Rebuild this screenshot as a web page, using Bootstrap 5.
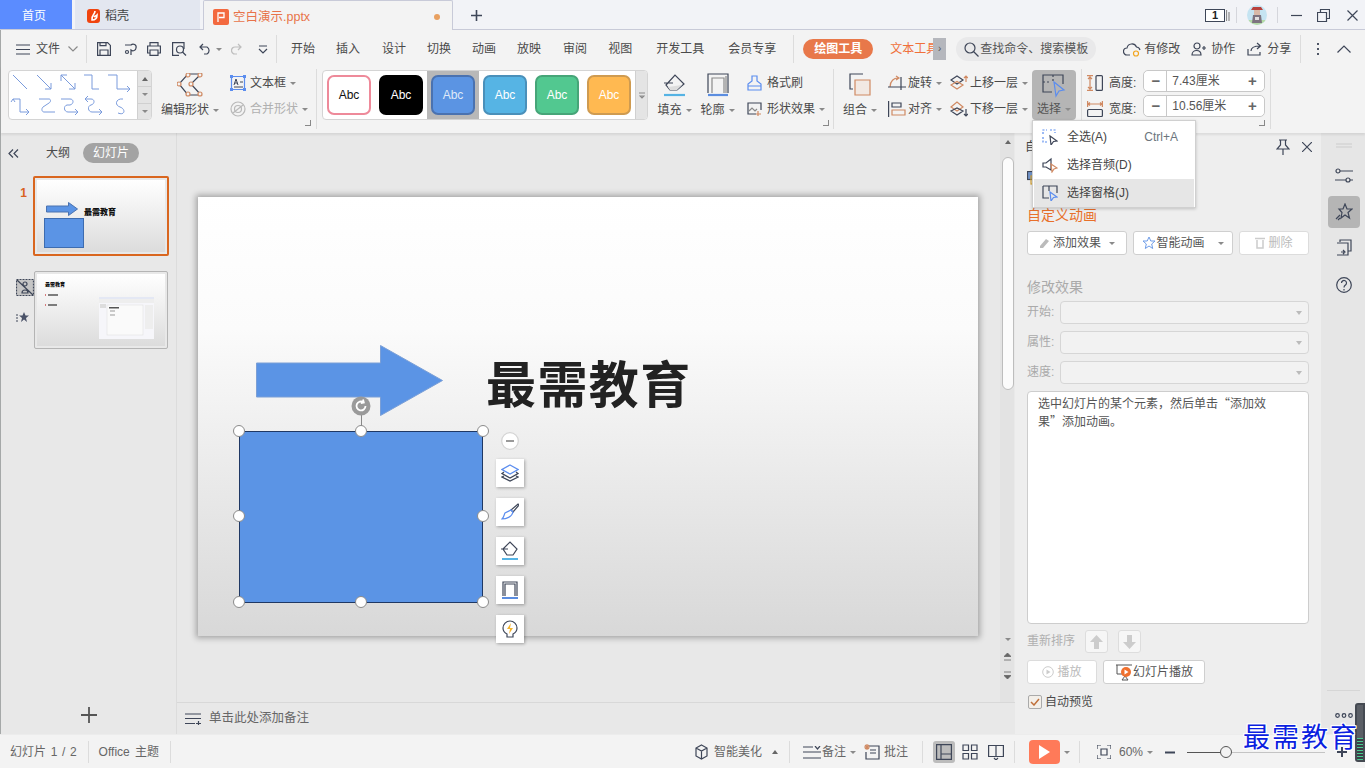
<!DOCTYPE html>
<html lang="zh-CN">
<head>
<meta charset="utf-8">
<title>空白演示.pptx</title>
<link href="https://cdn.jsdelivr.net/npm/bootstrap@5.3.0/dist/css/bootstrap.min.css" rel="stylesheet">
<style>
html,body{height:100%;overflow:hidden}
body{font-family:"Liberation Sans","Noto Sans CJK SC",sans-serif;font-size:12px;line-height:1.2;color:#4a4a4a;background:#f3f3f3}
svg{display:block;flex:none}
.ic{fill:none;stroke:#3e4658;stroke-width:1.2}
.ic .o{stroke:#d08a63}.ic .b{stroke:#5b8def}.ic .g{stroke:#8a8a8a}.ic .lb{stroke:#55b3e4}
.ic .fb{fill:#5b8def;stroke:none}
.x1{margin-left:1px}.x2{margin-left:2px}.x3{margin-left:3px}.x4{margin-left:4px}.x5{margin-left:5px}.x6{margin-left:6px}.x7{margin-left:7px}.x8{margin-left:8px}.x9{margin-left:9px}.x10{margin-left:10px}.x11{margin-left:11px}.x12{margin-left:12px}.x13{margin-left:13px}.x14{margin-left:14px}.x15{margin-left:15px}.x16{margin-left:16px}.x17{margin-left:17px}.x21{margin-left:21px}.x22{margin-left:22px}.x24{margin-left:24px}.x27{margin-left:27px}
.crt{display:inline-block;flex:none;width:0;height:0;border-left:3px solid transparent;border-right:3px solid transparent;border-top:3px solid #8a8a8a}
.crt-up{border-top:0;border-bottom:4px solid #666}
.vsep{width:1px;align-self:stretch;background:#dcdcdc;flex:none}
/* title bar */
.ttl{height:30px;background:#f2f3f7;border-bottom:1px solid #c8cad8;flex:none}
.tab-home{width:72px;height:29px;background:#5b8cff;color:#fff;padding:3px 4px 0 0}
.tab-dk{width:125px;height:29px;background:#e3e7f0;margin-left:3px;padding:3px 0 0 12px;color:#444}
.tab-cur{width:250px;height:30px;margin-left:3px;background:#f3f3f3;border:1px solid #c8cad8;border-bottom:0;border-radius:2px 2px 0 0;padding:3px 0 0 9px;color:#e8734a;font-size:12.5px}
.dot-o{width:6px;height:6px;border-radius:50%;background:#e8a060;margin-left:auto;margin-right:12px}
.logo{width:16px;height:16px;border-radius:2px;background:#f3693f;color:#fff}
.num1{width:20px;height:13px;border:1px solid #3e4658;background:#fff;font-size:11px;font-weight:700;color:#222;line-height:11px;text-align:center}
.winsep{height:16px;width:1px;background:#d5d6dc}
.plus-t{margin-top:2px}
.win-r{padding-top:1px}
.win-end{margin-right:7px}
/* body */
.wbody{border-left:1px solid #a5a8a8;min-height:0}
.mrow{height:36px;flex:none;padding-top:2px;background:#f3f3f3}
.mrow .vsep{margin-top:3px;margin-bottom:3px}
.pill-o{width:70px;height:20px;border-radius:10px;background:#e8784a;color:#fff;font-weight:700}
.txt-o{width:43px;overflow:hidden;white-space:nowrap;color:#f0703a}
.more-b{width:13px;height:22px;background:#b5b7bd;color:#555;font-size:10px}
.srch{width:140px;height:24px;border-radius:12px;background:#e9e9ea;padding-left:8px;color:#555}
/* ribbon */
.rib{height:67px;flex:none;background:#f3f3f3;padding-top:3px;position:relative;box-shadow:0 2px 2px rgba(0,0,0,.08);z-index:2}
.rib>.vsep{height:60px;align-self:flex-start}
.gal{width:144px;height:50px;margin-top:1px;background:#fff;border:1px solid #d4d4d4;border-radius:4px;overflow:hidden}
.gal2{width:326px}
.galbar{width:15px;background:#e4e4e4;border-left:1px solid #d0d0d0;color:#999;margin-left:auto}
.galbar2{width:12px}
.galbar>div{flex:1;border-bottom:1px solid #d0d0d0}
.galbar>div:last-child{border-bottom:0}
.sw-wrap{width:52px;height:48px}
.sw-on{background:#b8b8b8}
.sw{width:44px;height:40px;border-radius:7px;border:2px solid;font-size:12px}
.sw1{background:#fff;border-color:#ee8a9a;color:#111}
.sw2{background:#000;border-color:#000;color:#fff}
.sw3{background:#5b94e3;border-color:#4a72b0;color:#dfe9f8}
.sw4{background:#56b4e4;border-color:#4a90ba;color:#fff}
.sw5{background:#52c890;border-color:#46a578;color:#fff}
.sw6{background:#ffb951;border-color:#cf9b50;color:#fff}
.bigb{height:51px;flex:none}
.bigb .lbl{margin-top:6px;white-space:nowrap}
.w56{width:56px}.w31{width:31px}.w35{width:35px}.w32{width:32px}.w44{width:44px}
.sel-on{background:#b5b5b5;border-radius:4px;height:50px;margin-top:1px}
.sel-on .lbl{margin-top:4px;color:#555}
.colr{height:52px;flex:none;margin-top:1px}
.colr>div{height:26px;white-space:nowrap}
.w74{width:74px}.w76{width:76px}.w56c{width:56px}.w78{width:78px}.w178{width:178px}
.lch{width:6px;height:6px;border-right:1px solid #888;border-bottom:1px solid #888;align-self:flex-start;margin-top:51px;flex:none}
.lch-neg{margin-left:-6px}
.off{color:#b0b0b0}
.spn{width:123px;height:22px;margin-left:7px;flex-wrap:nowrap;background:#fff;border:1px solid #c8c8c8;border-radius:5px;margin-top:-4px}
.spn2{margin-top:-6px}
.spn .input-group-text{background:#fff;border:0;border-radius:5px;padding:0;height:20px;font-size:12px;color:#555;justify-content:center}
.spn .pm{width:23px;font-size:15px;font-weight:700;color:#666}
.spn .mid{flex:1;justify-content:flex-start;padding-left:5px;border-left:1px solid #c8c8c8;border-right:1px solid #c8c8c8;border-radius:0;margin:0}
/* main */
.mn{min-height:0;background:#e8e8e8}
.lpane{width:176px;flex:none;border-right:1px solid #dcdcdc}
.ltabs{height:40px}
.pill-g{width:56px;height:20px;border-radius:10px;background:#a3a3a3;color:#fff}
.numo{width:32px;color:#d9621f;font-weight:700;text-align:right;padding-right:6px;padding-top:13px}
.th1{width:136px;height:80px;border:2px solid #d9661f;border-radius:2px;margin-top:3px;position:relative;padding:2px}
.th2{width:134px;height:78px;border:1px solid #b4b4b4;border-radius:2px;position:relative;padding:2px;margin-left:1px}
.th-row2{margin-top:15px}
.th-in{width:100%;height:100%;background:linear-gradient(#fff,#dcdcdc);position:relative;overflow:hidden}
.tside{width:32px;padding-left:15px;padding-top:8px}
.plusl{height:32px;margin-top:auto;margin-bottom:3px;font-size:0}
.cv-col{min-width:0}
.canvas{min-height:0;padding:64px 0 0 21px}
.slide{width:780px;height:439px;background:linear-gradient(#fff 0,#fbfbfb 30%,#d8d8d8 100%);position:relative;box-shadow:0 0 6px 2px rgba(0,0,0,.3)}
.bigt{position:absolute;left:288px;top:154px;font-size:50px;letter-spacing:1.4px;font-weight:700;line-height:60px;color:#222;font-family:"Noto Sans CJK SC",sans-serif;white-space:nowrap}
.abs{position:absolute}
.rect1{left:41px;top:234px;width:244px;height:172px;background:#5b94e5;border:1px solid #1f3864}
.hd{width:12px;height:12px;border-radius:50%;background:#fff;border:1px solid #8b8b8b;transform:translate(-50%,-50%)}
.hd1{left:41px;top:234px}.hd2{left:163px;top:234px}.hd3{left:285px;top:234px}.hd4{left:41px;top:319px}.hd5{left:285px;top:319px}.hd6{left:41px;top:405px}.hd7{left:163px;top:405px}.hd8{left:285px;top:405px}
.rotl{left:163px;top:216px;width:1px;height:18px;background:#888}
.qk{left:298px;width:28px;height:28px;background:#fff;box-shadow:1px 1px 3px rgba(0,0,0,.3)}
.q1{top:262px}.q2{top:301px}.q3{top:340px}.q4{top:379px}.q5{top:418px}
.nt{height:32px;flex:none;border-top:1px solid #d8d8d8;padding-left:8px;font-size:12.5px;color:#666}
.vbar{width:15px;flex:none;background:#e3e3e3;position:relative;border-right:1px solid #e9e9e9;padding:0 0 18px 1px}
.vthumb{width:12px;height:233px;background:#fbfbfb;border:1px solid #bdbdbd;border-radius:6px;margin-top:6px}
.vcr{color:#666;height:18px}
.rpane{width:307px;flex:none;background:#eee;padding:0 12px;border-right:1px solid #e6e6e6;position:relative}
.rtitle{height:28px;margin:0 -3px 0 -2px;color:#444}
.ic-a{margin-top:10px}
.h-o{color:#e8702a;font-size:14px;height:20px;line-height:20px;margin-top:20px}
.r-btns{margin-top:6px}
.pb{height:24px;background:#fff;border:1px solid #cfcfcf;border-radius:3px;font-size:12px;color:#555;padding:0;--bs-btn-font-size:12px;flex:none}
.pb:disabled,.pb.dis{color:#bbb;opacity:1;background:#fff;border-color:#dcdcdc}
.pb1{width:100px}.pb2{width:70px}.pb3{width:102px}
.h-g{color:#aaa;font-size:14px;height:20px;line-height:20px;margin-top:22px}
.lblg{width:33px;color:#aaa;flex:none}
.sl-row1{margin-top:4px}.sl-row{margin-top:7px}
.sl{height:23px;width:249px;padding:0;background-color:#f2f2f2;border:1px solid #d6d6d6;border-radius:4px;background-size:6px 4px;background-position:right 6px center;background-image:url("data:image/svg+xml,%3Csvg xmlns='http://www.w3.org/2000/svg' viewBox='0 0 6 4'%3E%3Cpath d='M0 0h6L3 4z' fill='%23bbb'/%3E%3C/svg%3E")}
.sl:disabled{background-color:#f2f2f2}
.ta{height:233px;margin-top:7px;font-family:"Noto Sans CJK SC",sans-serif;font-size:12px;line-height:18px;padding:2px 36px 0 10px;border:1px solid #cdcdcd;border-radius:4px;background:#fff;color:#555}
.ord{margin-top:6px}.ply{margin-top:7px}.aut{margin-top:11px}
.mvb{width:23px;height:23px;background:#f6f6f6;border:1px solid #ddd;border-radius:3px}
.ck{width:14px;height:14px;background:#f3efe9;border:1px solid #aaa;border-radius:2px;margin-left:1px}
.rstrip{width:43px;flex:none;background:#e6e6e6;position:relative}
.rs-on{width:32px;height:32px;background:#b5b5b5;border-radius:4px;margin-top:12px}
.rs1{margin-top:10px}.rs2{margin-top:20px}.rs3{margin-top:11px}.rs4{margin-top:20px}
.rs-l{width:33px;border-top:1px solid #d6d6d6;margin-bottom:22px}
.st{height:34px;flex:none;background:#f3f3f3;border-top:1px solid #ececec;color:#666;position:relative;padding-top:1px}
.st .vsep{margin-top:5px;margin-bottom:5px}
.stt1{word-spacing:1.300px}.stt2{word-spacing:2px}
.st-end{margin-right:18px}
.view-on{width:22px;height:22px;background:#bcbcbc;border-radius:3px}
.playb{width:31px;height:24px;background:#ff7a59;border-radius:4px}
.sldr{width:138px;height:1px;background:linear-gradient(90deg,#555 0 39px,#c4c4c4 39px);position:relative;margin-left:12px}
.knob{position:absolute;left:33px;top:-6px;width:12px;height:12px;border:1px solid #555;border-radius:50%;background:#f3f3f3}
.selmenu{position:absolute;left:1032px;top:120px;width:164px;height:88px;padding:2px 1px 1px;margin:0;border:1px solid #d0d0d0;border-radius:0;background:#fff;box-shadow:0 1px 3px rgba(0,0,0,.2);display:block;z-index:5;min-width:0}
.selmenu .dropdown-item{height:28px;padding:0 0 0 8px;font-size:12px;color:#444;display:flex;align-items:center}
.selmenu .dropdown-item.on{background:#e6e6e6}
.wmk{position:absolute;left:1243px;top:718px;font-family:"Noto Sans CJK SC",sans-serif;font-size:27px;letter-spacing:2px;line-height:36px;color:#0b1fe0;white-space:nowrap;z-index:6;text-shadow:1px 0 #fff,-1px 0 #fff,0 1px #fff,0 -1px #fff,1px 1px #fff,-1px -1px #fff,1px -1px #fff,-1px 1px #fff}
.meter{position:absolute;left:1355px;top:703px;width:10px;height:59px;background:linear-gradient(#5b5f66 0 60%,transparent 60%),repeating-linear-gradient(#49c98f 0 1px,#3a3f47 1px 3px);border:2px solid #454a52;border-radius:3px 0 0 3px;z-index:5}
</style>
</head>
<body class="d-flex flex-column">
<!-- title bar -->
<div class="ttl d-flex align-items-start">
  <div class="tab-home d-flex align-items-center justify-content-center">首页</div>
  <div class="tab-dk d-flex align-items-center">
    <svg width="13" height="14" viewBox="0 0 13 14"><rect width="13" height="14" rx="3" fill="#f0440f"/><path d="M8 2c0 4-4 4-3 9 3 0 5-2 5-5-1 1-2 1-3 2" fill="none" stroke="#fff" stroke-width="1.6"/></svg>
    <span class="x5">稻壳</span>
  </div>
  <div class="tab-cur d-flex align-items-center">
    <div class="logo d-flex align-items-center justify-content-center"><svg width="10" height="10" viewBox="0 0 10 10"><path d="M2 10V1h6v4.500H3" fill="none" stroke="#fff" stroke-width="1.300"/></svg></div>
    <span class="x4">空白演示.pptx</span>
    <div class="dot-o"></div>
  </div>
  <svg class="ic x17 align-self-center plus-t" width="13" height="13" viewBox="0 0 13 13"><path d="M6.500 1v11M1 6.500h11" stroke-width="1.600"/></svg>
  <div class="ms-auto d-flex align-items-center h-100 win-r">
    <div class="num1">1</div>
    <svg class="ic x1" width="4" height="13" viewBox="0 0 4 13"><path class="g" d="M.5 1v11M3 3v9"/></svg>
    <div class="winsep x6"></div>
    <svg class="x10" width="20" height="20" viewBox="0 0 20 20"><defs><clipPath id="avc"><circle cx="10" cy="10" r="10"/></clipPath></defs><g clip-path="url(#avc)"><rect width="20" height="20" fill="#c5e4f2"/><rect y="15" width="20" height="5" fill="#b4dba6"/><path d="M6 2h8l2 3H4z" fill="#b8413c"/><rect x="7" y="5" width="6" height="5" fill="#d8b9a8"/><path d="M6 10h8l1 8H5z" fill="#7d7480"/><rect x="8" y="12" width="4" height="3" fill="#e2dede"/></g></svg>
    <div class="winsep x10"></div>
    <svg class="ic x13" width="11" height="11" viewBox="0 0 11 11"><path d="M0 5.500h11"/></svg>
    <svg class="ic x15" width="13" height="13" viewBox="0 0 13 13"><path d="M.5 3.500h9v9h-9zM3.500 3.500v-3h9v9h-3"/></svg>
    <svg class="ic x17 win-end" width="11" height="11" viewBox="0 0 11 11"><path d="M.5.500l10 10M10.500.500l-10 10"/></svg>
  </div>
</div>
<div class="wbody d-flex flex-column flex-grow-1">
<!-- menu row -->
<div class="mrow d-flex align-items-center">
  <svg class="ic x15" width="14" height="11" viewBox="0 0 14 11"><path d="M0 1h14M0 5.500h14M0 10h14"/></svg>
  <span class="x6">文件</span>
  <svg class="ic x8" width="10" height="6" viewBox="0 0 10 6"><path class="g" d="M.5.500L5 5 9.500.500"/></svg>
  <div class="vsep x8"></div>
  <svg class="ic x10" width="14" height="14" viewBox="0 0 14 14"><path d="M.6.600h10l2.800 2.800v10H.6zM3 13V8h8v5M3 .6v3h6v-3"/></svg>
  <svg class="ic x13" width="14" height="14" viewBox="0 0 14 14"><path d="M1 3h6a3 3 0 0 1 5 3 3 3 0 0 1-5 2v5" /><circle cx="3" cy="10" r="1.500"/></svg>
  <svg class="ic x9" width="14" height="14" viewBox="0 0 14 14"><path d="M3 4V.6h8V4M3 11H.6V4h12.800v7H11M3 8h8v5.400H3z"/></svg>
  <svg class="ic x11" width="15" height="14" viewBox="0 0 15 14"><path d="M12 7V.6H.6v12.800H7"/><circle cx="8" cy="7.500" r="3.500"/><path d="M10.500 10l3.500 3.500"/></svg>
  <svg class="ic x12" width="13" height="12" viewBox="0 0 13 12"><path d="M4 1L1 4l3 3M1 4h7a4 4 0 0 1 0 7H5"/></svg>
  <span class="crt x4"></span>
  <svg class="ic x9" width="11" height="12" viewBox="0 0 11 12"><path class="g" d="M7 1l3 3-3 3M10 4H4a3 3 0 0 0 0 7h2" opacity=".5"/></svg>
  <svg class="ic x16" width="10" height="9" viewBox="0 0 10 9"><path d="M1 1h8M1 4l4 4 4-4"/></svg>
  <div class="vsep x8"></div>
  <span class="x14">开始</span><span class="x21">插入</span><span class="x22">设计</span><span class="x21">切换</span><span class="x21">动画</span><span class="x21">放映</span><span class="x22">审阅</span><span class="x21">视图</span><span class="x24">开发工具</span><span class="x24">会员专享</span>
  <div class="vsep x17"></div>
  <div class="pill-o x9 d-flex align-items-center justify-content-center">绘图工具</div>
  <div class="txt-o x17">文本工具</div>
  <div class="more-b d-flex align-items-center justify-content-center">›</div>
  <div class="srch x10 d-flex align-items-center">
    <svg class="ic" width="15" height="15" viewBox="0 0 15 15"><circle cx="6" cy="6" r="5"/><path d="M9.500 9.500l5 5"/></svg>
    <span class="x1 text-nowrap">查找命令、搜索模板</span>
  </div>
  <svg class="ic x27" width="18" height="15" viewBox="0 0 18 15"><path d="M7 13H4a3.500 3.500 0 0 1 0-7 5 5 0 0 1 9.500-1A4 4 0 0 1 17 8"/><circle cx="13" cy="11.500" r="2.500" stroke="#f2a51e"/></svg>
  <span class="x3">有修改</span>
  <svg class="ic x11" width="16" height="14" viewBox="0 0 16 14"><circle cx="6" cy="4" r="3"/><path d="M1 13c0-6 9-6 9 0zM11 6h4M13 4v4"/></svg>
  <span class="x4">协作</span>
  <svg class="ic x12" width="15" height="14" viewBox="0 0 15 14"><path d="M1 7v6h12v-3M4 9c0-4 4-5 9-5M10 1l3.500 3L10 7"/></svg>
  <span class="x5">分享</span>
  <div class="vsep x9"></div>
  <svg class="ic x13" width="8" height="14" viewBox="0 0 8 14"><path d="M4 1v2M4 6v2M4 11v2" stroke-width="1.800"/></svg>
  <svg class="ic x15" width="14" height="8" viewBox="0 0 14 8"><path d="M.5 7.500L7 1l6.500 6.500"/></svg>
</div>
<!-- ribbon -->
<div class="rib d-flex align-items-start">
  <div class="gal x7 d-flex">
    <svg class="ic" width="128" height="48" viewBox="0 0 128 48"><g stroke="#7a9bdc" stroke-width="1">
      <path d="M4 4l14 14M28 4l14 14M42 12v6h-6M52 4l14 14M52 10V4h6M66 12v6h-6M75 4h8v14h7M99 4h9v14h13M118 15l3 3-3 3"/>
      <path d="M4 28h7v13h9M2 31l2-3 2 3M17 38l3 3-3 3M30 28h10c2 0 2 3 0 4l-6 4c-2 2-1 5 1 5h11M52 28h9c4 0 4 5 0 6h-3c-4 1-3 7 1 7h9M66 38l3 3-3 3M76 28h6c4 0 4 5 0 6s-3 7 1 7h10M79 25l-3 3 3 3M90 38l3 3-3 3M114 28c-7-1-9 6-3 8s5 9-2 6"/></g></svg>
    <div class="galbar d-flex flex-column">
      <div class="d-flex align-items-center justify-content-center"><span class="crt crt-up"></span></div>
      <div class="d-flex align-items-center justify-content-center"><span class="crt"></span></div>
      <div class="d-flex align-items-center justify-content-center"><span class="crt"></span></div>
    </div>
  </div>
  <div class="bigb w56 x10 d-flex flex-column align-items-center">
    <svg class="ic mt-1" width="26" height="24" viewBox="0 0 26 24"><path d="M11 1h13l-10 10 10 11H11L2 11zM14 11" /><g class="o"><circle class="o" cx="11" cy="2" r="2" fill="#f3f3f3"/><circle class="o" cx="23" cy="2" r="2" fill="#f3f3f3"/><circle class="o" cx="14" cy="11" r="2" fill="#f3f3f3"/><circle class="o" cx="2" cy="11" r="2" fill="#f3f3f3"/><circle class="o" cx="11" cy="21" r="2" fill="#f3f3f3"/><circle class="o" cx="23" cy="21" r="2" fill="#f3f3f3"/></g></svg>
    <div class="lbl d-flex align-items-center gap-1">编辑形状<span class="crt"></span></div>
  </div>
  <div class="colr w74 x12 d-flex flex-column">
    <div class="d-flex align-items-center">
      <svg class="ic" width="16" height="16" viewBox="0 0 16 16"><path class="b" d="M1.500 1.500h13v13h-13z"/><path d="M4 10l2-6 2 6M4.800 8h2.500M10 7h3M4 12h9" stroke-width="1"/><g class="fb"><rect class="fb" width="3" height="3"/><rect class="fb" x="13" width="3" height="3"/><rect class="fb" y="13" width="3" height="3"/><rect class="fb" x="13" y="13" width="3" height="3"/></g></svg>
      <span class="x4">文本框</span><span class="crt x4"></span>
    </div>
    <div class="d-flex align-items-center off">
      <svg class="ic" width="16" height="16" viewBox="0 0 16 16"><g class="g" opacity=".55"><circle class="g" cx="8" cy="8" r="7"/><circle class="g" cx="8" cy="8" r="3.500"/><path class="g" d="M3 12L13 4"/></g></svg>
      <span class="x4">合并形状</span><span class="crt x4"></span>
    </div>
  </div>
  <div class="lch x1"></div>
  <div class="vsep x5"></div>
  <div class="gal gal2 x5 d-flex align-items-center">
    <div class="sw-wrap d-flex align-items-center justify-content-center"><div class="sw sw1 d-flex align-items-center justify-content-center">Abc</div></div>
    <div class="sw-wrap d-flex align-items-center justify-content-center"><div class="sw sw2 d-flex align-items-center justify-content-center">Abc</div></div>
    <div class="sw-wrap sw-on d-flex align-items-center justify-content-center"><div class="sw sw3 d-flex align-items-center justify-content-center">Abc</div></div>
    <div class="sw-wrap d-flex align-items-center justify-content-center"><div class="sw sw4 d-flex align-items-center justify-content-center">Abc</div></div>
    <div class="sw-wrap d-flex align-items-center justify-content-center"><div class="sw sw5 d-flex align-items-center justify-content-center">Abc</div></div>
    <div class="sw-wrap d-flex align-items-center justify-content-center"><div class="sw sw6 d-flex align-items-center justify-content-center">Abc</div></div>
    <div class="galbar galbar2 h-100 d-flex align-items-center justify-content-center"><svg class="ic" width="6" height="7" viewBox="0 0 6 7"><path class="g" d="M0 1h6M1 4h4l-2 2z"/></svg></div>
  </div>
  <div class="bigb w31 x11 d-flex flex-column align-items-center">
    <svg class="ic mt-1" width="24" height="24" viewBox="0 0 24 24"><path d="M3 12L12 2l9 9-7 6H7zM1 10h9"/><path d="M5 14l2 3h7l5-5z" fill="#ddd" stroke="none"/><path class="lb" d="M1 22h21" stroke-width="2.200"/></svg>
    <div class="lbl d-flex align-items-center gap-1">填充<span class="crt"></span></div>
  </div>
  <div class="bigb w35 x10 d-flex flex-column align-items-center">
    <svg class="ic mt-1" width="22" height="24" viewBox="0 0 22 24"><path d="M1 20V1h20v19"/><path class="g" d="M5 20V5h12v15M19 3v17" /><path d="M1 22h20" stroke="#5b8de0" stroke-width="2.200"/></svg>
    <div class="lbl d-flex align-items-center gap-1">轮廓<span class="crt"></span></div>
  </div>
  <div class="colr w76 x12 d-flex flex-column">
    <div class="d-flex align-items-center">
      <svg class="ic" width="15" height="16" viewBox="0 0 15 16"><path class="b" d="M5 1h5v5l4 3v6H1V9l4-3zM1 11h13"/></svg>
      <span class="x5">格式刷</span>
    </div>
    <div class="d-flex align-items-center">
      <svg class="ic" width="15" height="15" viewBox="0 0 15 15"><path d="M9 12H1V1h13v7"/><path class="g" d="M2 9l3-3 3 3 2-2"/><path class="o" d="M11 9v5M9 12h5"/></svg>
      <span class="x5">形状效果</span><span class="crt x4"></span>
    </div>
  </div>
  <div class="lch"></div>
  <div class="vsep x4"></div>
  <div class="bigb w32 x10 d-flex flex-column align-items-center">
    <svg class="ic mt-1" width="22" height="24" viewBox="0 0 22 24"><path d="M14 1H1v15h3" /><path class="o" d="M6 7h15v15H6z" fill="#f2e9e3"/></svg>
    <div class="lbl d-flex align-items-center gap-1">组合<span class="crt"></span></div>
  </div>
  <div class="colr w56c x12 d-flex flex-column">
    <div class="d-flex align-items-center">
      <svg class="ic" width="18" height="16" viewBox="0 0 18 16"><path class="o" d="M2 12C2 6 6 3 10 3M8 1l3 2-3 2"/><path d="M0 12h18M13 2v13"/></svg>
      <span class="x2">旋转</span><span class="crt x4"></span>
    </div>
    <div class="d-flex align-items-center">
      <svg class="ic" width="18" height="16" viewBox="0 0 18 16"><path d="M.6 0v16M4 2h9v4H4z"/><path class="o" d="M4 9h13v5H4z"/></svg>
      <span class="x2">对齐</span><span class="crt x4"></span>
    </div>
  </div>
  <div class="colr w78 x6 d-flex flex-column">
    <div class="d-flex align-items-center">
      <svg class="ic" width="18" height="17" viewBox="0 0 18 17"><path d="M1 5l6-4 6 4-6 4z"/><path class="o" d="M1 10l6-3.500 6 3.500-6 4zM16 7V1M14 3l2-2 2 2"/></svg>
      <span class="x2">上移一层</span><span class="crt x4"></span>
    </div>
    <div class="d-flex align-items-center">
      <svg class="ic" width="18" height="17" viewBox="0 0 18 17"><path class="o" d="M1 6l6-5 6 5-6 4z"/><path d="M1 10l6-3 6 3-6 4zM16 8v7M14 13l2 2 2-2"/></svg>
      <span class="x2">下移一层</span><span class="crt x4"></span>
    </div>
  </div>
  <div class="bigb sel-on w44 x4 d-flex flex-column align-items-center">
    <svg class="ic mt-1" width="24" height="24" viewBox="0 0 24 24"><path d="M1 12V1h20v9M1 1v17h9" /><path d="M11 1v6M1 8h6" stroke-dasharray="2 2"/><path class="b" d="M12 8l10 8-5 1-3 5z"/></svg>
    <div class="lbl d-flex align-items-center gap-1">选择<span class="crt"></span></div>
  </div>
  <div class="vsep x5"></div>
  <div class="colr w178 x5 d-flex flex-column">
    <div class="d-flex align-items-center">
      <svg class="ic" width="16" height="16" viewBox="0 0 16 16"><path class="o" d="M0 .6h6M0 15.400h6M3 1v14M1 4l2-2 2 2M1 12l2 2 2-2"/><rect x="9" y=".6" width="6.400" height="14.800" rx="1"/></svg>
      <span class="x6">高度:</span>
      <div class="input-group spn"><span class="input-group-text pm">−</span><span class="input-group-text mid">7.43厘米</span><span class="input-group-text pm">+</span></div>
    </div>
    <div class="d-flex align-items-center">
      <svg class="ic" width="16" height="16" viewBox="0 0 16 16"><path class="o" d="M.6 0v6M15.400 0v6M1 3h14M3 1.500L1 3l2 1.500M13 1.500L15 3l-2 1.500"/><rect x=".6" y="8.500" width="14.800" height="7" rx="1"/></svg>
      <span class="x6">宽度:</span>
      <div class="input-group spn spn2"><span class="input-group-text pm">−</span><span class="input-group-text mid">10.56厘米</span><span class="input-group-text pm">+</span></div>
    </div>
  </div>
  <div class="lch lch-neg"></div>
  <div class="vsep x5"></div>
</div>
<!-- main -->
<div class="mn flex-grow-1 d-flex">
  <div class="lpane d-flex flex-column">
    <div class="ltabs d-flex align-items-center">
      <svg class="ic x7" width="11" height="9" viewBox="0 0 11 9"><path d="M5 .5L1 4.500l4 4M10 .5L6 4.500l4 4"/></svg>
      <span class="x27">大纲</span>
      <div class="pill-g x13 d-flex align-items-center justify-content-center">幻灯片</div>
    </div>
    <div class="d-flex">
      <div class="numo">1</div>
      <div class="th1"><div class="th-in">
        <svg class="abs" style="left:9px;top:22px" width="32" height="14" viewBox="0 0 32 14"><path d="M.5 4h22V.5l9 6.500-9 6.500V10H.5z" fill="#5b94e5" stroke="#4a72b0"/></svg>
        <span class="abs" style="left:47px;top:28px;font-size:8px;font-weight:900;color:#111;white-space:nowrap;line-height:10px">最需教育</span>
        <div class="abs" style="left:7px;top:38px;width:40px;height:30px;background:#5b94e5;border:1px solid #3d6cb0"></div>
      </div></div>
    </div>
    <div class="d-flex th-row2">
      <div class="tside d-flex flex-column">
        <svg class="ic" width="18" height="17" viewBox="0 0 18 17"><rect x=".5" y=".5" width="17" height="16" fill="#c5c5c5" stroke-dasharray="2 1"/><path d="M1 1l16 15M6 14c0-4 6-4 6 0zM7 5a2 2 0 1 1 4 0 2 2 0 0 1-4 0z"/></svg>
        <svg class="ic mt-3" width="14" height="10" viewBox="0 0 14 10"><path d="M8 0l1.500 3.500H13L10 6l1 4-3-2.500L5 10l1-4-3-2.500h3.500z" fill="#4a5268" stroke="none"/><path d="M0 3h2M0 6h2M0 9h2"/></svg>
      </div>
      <div class="th2"><div class="th-in">
        <span class="abs" style="left:8px;top:7px;font-size:5px;font-weight:900;color:#111;white-space:nowrap;line-height:6px">最需教育</span>
        <svg class="abs" style="left:8px;top:19px" width="20" height="20" viewBox="0 0 20 20"><path d="M0 2h1M0 12h1" stroke="#c55" stroke-width="1.500"/><path d="M3 2h10M3 12h9" stroke="#555" stroke-width="1.500"/></svg>
        <svg class="abs" style="left:62px;top:23px" width="55" height="42" viewBox="0 0 55 42"><rect width="55" height="42" fill="#f6f6fa"/><rect width="55" height="2" fill="#e4e8f4"/><rect y="2" width="55" height="4" fill="#eee"/><rect x="8" y="8" width="36" height="30" fill="#fafafa" stroke="#ddd" stroke-width=".5"/><rect x="10" y="10" width="10" height="1.500" fill="#555"/><path d="M11 14h5M11 18h5" stroke="#999"/><rect x="1" y="7" width="6" height="4" fill="#ddd"/><rect x="46" y="8" width="8" height="24" fill="#eee"/></svg>
      </div></div>
    </div>
    <div class="plusl d-flex align-items-center justify-content-center"><svg class="ic" width="16" height="16" viewBox="0 0 16 16"><path d="M8 0v16M0 8h16" stroke="#555" stroke-width="1.800"/></svg></div>
  </div>
  <div class="cv-col flex-grow-1 d-flex flex-column">
    <div class="d-flex flex-grow-1 flex-shrink-1 overflow-hidden">
      <div class="canvas flex-grow-1">
        <div class="slide">
          <svg class="abs" style="left:58px;top:148px" width="188" height="71" viewBox="0 0 188 71"><path d="M.5 18h124V.5l62 35-62 35V52H.5z" fill="#5b94e5" stroke="#7b9fd6"/></svg>
          <div class="bigt">最需教育</div>
          <div class="abs rect1"></div>
          <div class="abs rotl"></div>
          <svg class="abs" style="left:153px;top:199px" width="20" height="20" viewBox="0 0 20 20"><circle cx="10" cy="10" r="9.500" fill="#9a9a9a"/><path d="M14.500 10a4.500 4.500 0 1 1-2-3.800M12 3.500l.8 3-3 .6" fill="none" stroke="#fff" stroke-width="1.800"/></svg>
          <div class="abs hd hd1"></div><div class="abs hd hd2"></div><div class="abs hd hd3"></div><div class="abs hd hd4"></div><div class="abs hd hd5"></div><div class="abs hd hd6"></div><div class="abs hd hd7"></div><div class="abs hd hd8"></div>
          <svg class="abs" style="left:303px;top:235px" width="18" height="18" viewBox="0 0 18 18"><circle cx="9" cy="9" r="8.300" fill="#fff" stroke="#d4d4d4" stroke-width="1.200"/><path d="M5 9h8" stroke="#9a9a9a" stroke-width="2"/></svg>
          <div class="abs qk q1 d-flex align-items-center justify-content-center"><svg class="ic" width="18" height="18" viewBox="0 0 18 18"><path class="b" d="M9 1l8 4.500-8 4.500-8-4.500z"/><path d="M3 8l-2 1.500L9 14l8-4.500L15 8M3 12l-2 1L9 17l8-4-2-1"/></svg></div>
          <div class="abs qk q2 d-flex align-items-center justify-content-center"><svg class="ic" width="18" height="18" viewBox="0 0 18 18"><path d="M17 1l1 1-6 7-2-2z"/><path class="b" d="M10 7l2 2c-1 5-7 7-11 7 2-2 2-4 3-6 2-1 4-2 6-3z"/></svg></div>
          <div class="abs qk q3 d-flex align-items-center justify-content-center"><svg class="ic" width="18" height="20" viewBox="0 0 18 20"><path d="M2 8l7-7 7 7-4 6H6zM0 8h7"/><path class="lb" d="M1 18h16" stroke-width="2"/></svg></div>
          <div class="abs qk q4 d-flex align-items-center justify-content-center"><svg class="ic" width="18" height="18" viewBox="0 0 18 18"><path d="M2 15V1h14v14M4 15V3h10v12"/><path d="M1 17h16" stroke="#5b8de0" stroke-width="2"/></svg></div>
          <div class="abs qk q5 d-flex align-items-center justify-content-center"><svg class="ic" width="16" height="18" viewBox="0 0 16 18"><path d="M5 17h6v-3c2-1 4-3 4-6A7 7 0 0 0 1 8c0 3 2 5 4 6z"/><path d="M9 3L5 9h3l-1 5 4-6H8z" fill="#f4b32c" stroke="none"/></svg></div>
        </div>
      </div>
      <div class="vbar d-flex flex-column align-items-center">
        <div class="vcr d-flex align-items-center"><span class="crt crt-up"></span></div>
        <div class="vthumb"></div>
        <div class="flex-grow-1"></div>
        <div class="vcr d-flex align-items-center"><span class="crt"></span></div>
        <div class="vcr d-flex align-items-center"><svg class="ic" width="7" height="8" viewBox="0 0 7 8"><path d="M0 3.500L3.500 0 7 3.500zM0 7h7" fill="#666" stroke="#666" stroke-width=".8"/></svg></div>
        <div class="vcr d-flex align-items-center"><svg class="ic" width="7" height="8" viewBox="0 0 7 8"><path d="M0 4.500L3.500 8 7 4.500zM0 1h7" fill="#666" stroke="#666" stroke-width=".8"/></svg></div>
      </div>
    </div>
    <div class="nt d-flex align-items-center">
      <svg class="ic" width="16" height="12" viewBox="0 0 16 12"><path d="M0 1h16M0 5.500h16M0 10.500h10M11 10.500h5M13.500 8v5"/></svg>
      <span class="x8">单击此处添加备注</span>
    </div>
  </div>
  <div class="rpane d-flex flex-column">
    <div class="rtitle d-flex align-items-center">
      <span>自</span>
      <svg class="ic ms-auto" width="14" height="16" viewBox="0 0 14 16"><path d="M3 1h8M4.500 1v5L1 10h12L9.500 6V1M7 10v6"/></svg>
      <svg class="ic x12" width="10" height="10" viewBox="0 0 10 10"><path d="M0 0l10 10M10 0L0 10"/></svg>
    </div>
    <svg class="ic ic-a" width="14" height="14" viewBox="0 0 14 14"><rect x=".5" y=".5" width="8" height="8" fill="#6f93c9" stroke="#3e4658"/><rect x="4" y="5" width="8" height="8" stroke="#d7a534"/></svg>
    <div class="h-o">自定义动画</div>
    <div class="d-flex r-btns gap-1">
      <button class="btn pb pb1 d-flex align-items-center justify-content-center" type="button"><svg width="11" height="11" viewBox="0 0 11 11"><path d="M1 8l6-7 3 2-6 7H1z" fill="#bbb"/></svg><span class="x3">添加效果</span><span class="crt x8"></span></button>
      <button class="btn pb pb1 x2 d-flex align-items-center justify-content-center" type="button"><svg width="14" height="15" viewBox="0 0 14 15"><path d="M7 1l1.800 4H13l-3.300 3 1 4.500L7 10l-3.700 2.500 1-4.500L1 5h4.200z" fill="none" stroke="#6f9de8"/></svg><span>智能动画</span><span class="crt x13"></span></button>
      <button class="btn pb pb2 dis x2 d-flex align-items-center justify-content-center" type="button" disabled><svg width="10" height="12" viewBox="0 0 10 12"><path d="M0 1.500h10M2 3v8h6V3" fill="none" stroke="#ccc" stroke-width="1.500"/></svg><span class="x3">删除</span></button>
    </div>
    <div class="h-g">修改效果</div>
    <div class="d-flex align-items-center sl-row1"><span class="lblg">开始:</span><select class="form-select sl" disabled aria-label="开始"></select></div>
    <div class="d-flex align-items-center sl-row"><span class="lblg">属性:</span><select class="form-select sl" disabled aria-label="属性"></select></div>
    <div class="d-flex align-items-center sl-row"><span class="lblg">速度:</span><select class="form-select sl" disabled aria-label="速度"></select></div>
    <div class="ta">选中幻灯片的某个元素，然后单击“添加效果”添加动画。</div>
    <div class="d-flex align-items-center ord">
      <span class="off">重新排序</span>
      <div class="mvb x10 d-flex align-items-center justify-content-center"><svg width="13" height="14" viewBox="0 0 13 14"><path d="M6.500 0L13 7H9v7H4V7H0z" fill="#ccc"/></svg></div>
      <div class="mvb x10 d-flex align-items-center justify-content-center"><svg width="13" height="14" viewBox="0 0 13 14"><path d="M6.500 14L13 7H9V0H4v7H0z" fill="#ccc"/></svg></div>
    </div>
    <div class="d-flex ply gap-1">
      <button class="btn pb pb2 dis d-flex align-items-center justify-content-center" type="button" disabled><svg width="12" height="12" viewBox="0 0 12 12"><circle cx="6" cy="6" r="5.300" fill="none" stroke="#ccc"/><path d="M4.500 3.500l4 2.500-4 2.500z" fill="#ccc"/></svg><span class="x3">播放</span></button>
      <button class="btn pb pb3 x2 d-flex align-items-center justify-content-center" type="button"><svg width="18" height="18" viewBox="0 0 18 18"><path d="M1 2h16M2 2v9h13M7 17h6l-3-4z" fill="none" stroke="#555"/><circle cx="11" cy="9" r="5" fill="#f0702e"/><path d="M9.500 6.500l4 2.500-4 2.500z" fill="#fff"/></svg><span>幻灯片播放</span></button>
    </div>
    <div class="d-flex align-items-center aut">
      <div class="ck d-flex align-items-center justify-content-center"><svg width="10" height="8" viewBox="0 0 10 8"><path d="M1 4l3 3 5-6" fill="none" stroke="#c0703a" stroke-width="1.500"/></svg></div>
      <span class="x3">自动预览</span>
    </div>
  </div>
  <div class="rstrip d-flex flex-column align-items-center">
    <svg class="ic rs1" width="16" height="5" viewBox="0 0 16 5"><path d="M0 1h16M0 4h16" stroke="#ccc"/></svg>
    <svg class="ic rs2" width="18" height="16" viewBox="0 0 18 16"><circle cx="3" cy="3" r="2"/><path d="M5 3h13M0 12h11M15 12h3"/><circle cx="13" cy="12" r="2"/></svg>
    <div class="rs-on d-flex align-items-center justify-content-center"><svg class="ic" width="18" height="18" viewBox="0 0 18 18"><path d="M10 1l2 5h5l-4 3.500 1.500 5.500-4.500-3-4 3 1-5.500L4 6h4zM1 16l4-4M3 17l2-2"/></svg></div>
    <svg class="ic rs3" width="16" height="18" viewBox="0 0 16 18"><path d="M4 3V1h11v11h-3M1 4h11v12H1M5 13l3 0M7 11l2 2-2 2"/></svg>
    <svg class="ic rs4" width="16" height="16" viewBox="0 0 16 16"><circle cx="8" cy="8" r="7.300"/><path d="M5.500 6a2.500 2.500 0 1 1 4 2c-1 .7-1.500 1-1.500 2.500M8 12v1.500"/></svg>
    <div class="flex-grow-1"></div>
    <div class="rs-l"></div>
    <svg class="ic mb-3" width="18" height="5" viewBox="0 0 18 5"><circle cx="2.500" cy="2.500" r="1.800"/><circle cx="9" cy="2.500" r="1.800"/><circle cx="15.500" cy="2.500" r="1.800"/></svg>
  </div>
</div>
</div>
<!-- status -->
<div class="st d-flex align-items-center">
  <span class="x10 stt1">幻灯片 1 / 2</span>
  <div class="vsep x11"></div>
  <span class="x10 stt2">Office 主题</span>
  <div class="vsep x11"></div>
  <div class="ms-auto d-flex align-items-center h-100">
    <svg class="ic" width="13" height="16" viewBox="0 0 13 16"><path d="M6.500 1L12 4v8l-5.500 3L1 12V4zM1 4l5.500 3L12 4M6.500 7v8"/></svg>
    <span class="x6">智能美化</span><span class="crt crt-up x10"></span>
    <div class="vsep x11"></div>
    <svg class="ic x13" width="18" height="13" viewBox="0 0 18 13"><path d="M0 1h10M0 6h18M0 12h18M12 0l2.500 3L17 0"/></svg>
    <span class="x1">备注</span><span class="crt x4"></span>
    <svg class="ic x8" width="16" height="16" viewBox="0 0 16 16"><path d="M5 2h10v13H2V8M6 6h6M6 9h6"/><path class="o" d="M3 0v6M0 3h6M1 1l4 4M5 1L1 5"/></svg>
    <span class="x4">批注</span>
    <div class="vsep x14"></div>
    <div class="view-on x10 d-flex align-items-center justify-content-center"><svg class="ic" width="16" height="16" viewBox="0 0 16 16"><path d="M.6.6h14.800v14.800H.6zM5 .6v14.800M5 10h10.400"/></svg></div>
    <svg class="ic x7" width="16" height="16" viewBox="0 0 16 16"><path d="M1 1h5.500v5.500H1zM9.500 1H15v5.500H9.500zM1 9.500h5.500V15H1zM9.500 9.500H15V15H9.500z"/></svg>
    <svg class="ic x10" width="16" height="16" viewBox="0 0 16 16"><path d="M.6 1.500H8v11H.6zM8 1.500h7.400v11H8M6 14l2 2 2-2"/></svg>
    <div class="vsep x10"></div>
    <div class="playb x14 d-flex align-items-center justify-content-center"><svg width="12" height="14" viewBox="0 0 12 14"><path d="M1 0l11 7-11 7z" fill="#fff"/></svg></div>
    <span class="crt x4"></span>
    <div class="vsep x9"></div>
    <svg class="ic x17" width="14" height="14" viewBox="0 0 14 14"><path d="M0 4V0h4M10 0h4v4M14 10v4h-4M4 14H0v-4M4 4h6v6H4z"/></svg>
    <span class="x8">60%</span><span class="crt x4"></span>
    <svg class="ic x12" width="10" height="3" viewBox="0 0 10 3"><path d="M0 1.500h10" stroke-width="2"/></svg>
    <div class="sldr"><div class="knob"></div></div>
    <svg class="ic x12 st-end" width="10" height="10" viewBox="0 0 10 10"><path d="M0 5h10M5 0v10" stroke-width="2"/></svg>
  </div>
</div>
<!-- overlays -->
<div class="dropdown-menu show selmenu">
  <a class="dropdown-item" href="#"><svg class="ic" width="16" height="16" viewBox="0 0 16 16"><path class="b" d="M1 5V1h4M8 1h5v3M1 8v5h4" stroke-dasharray="2 1.500"/><path d="M8 7l7 5-3.500.5L9 16z"/></svg><span class="x9">全选(A)</span><span class="ms-auto me-3 text-secondary">Ctrl+A</span></a>
  <a class="dropdown-item" href="#"><svg class="ic" width="16" height="16" viewBox="0 0 16 16"><path d="M1 6h3l5-4v11L4 10H1z"/><path class="o" d="M9 7l6 4-3 1-2 3z"/></svg><span class="x9">选择音频(D)</span></a>
  <a class="dropdown-item on" href="#"><svg class="ic" width="16" height="16" viewBox="0 0 16 16"><path d="M1 1h14v7M1 1v12h6M7 1v5"/><path class="b" d="M8 7l7 5-3.500.5L9 16z"/></svg><span class="x9">选择窗格(J)</span></a>
</div>
<div class="meter"></div>
<div class="wmk">最需教育</div>
<script src="https://cdn.jsdelivr.net/npm/bootstrap@5.3.0/dist/js/bootstrap.bundle.min.js"></script>
</body>
</html>
